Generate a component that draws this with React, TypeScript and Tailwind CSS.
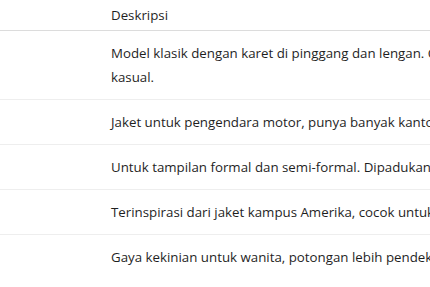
const rows = [
	{ nama: "Bomber", deskripsi: "Model klasik dengan karet di pinggang dan lengan. Cocok dipakai untuk gaya santai dan kasual." },
	{ nama: "Touring", deskripsi: "Jaket untuk pengendara motor, punya banyak kantong." },
	{ nama: "Blazer", deskripsi: "Untuk tampilan formal dan semi-formal. Dipadukan dengan kemeja." },
	{ nama: "Varsity", deskripsi: "Terinspirasi dari jaket kampus Amerika, cocok untuk remaja." },
	{ nama: "Crop", deskripsi: "Gaya kekinian untuk wanita, potongan lebih pendek." },
];

export default function App() {
	return (
		<div className="h-[287px] w-[430px] overflow-hidden bg-white font-['Open_Sans','Noto_Sans',sans-serif] text-[13.3px] leading-6 text-[#1f1f1f]">
			<div className="w-[700px]">
				<div className="grid grid-cols-[100px_590px] border-b border-[#dcdcdc]">
					<div />
					<div className="pl-[11px] pt-[3px] pb-[3px]">Deskripsi</div>
				</div>
				{rows.map((row) => (
					<div
						key={row.nama}
						className="grid grid-cols-[100px_590px] border-b border-[#eeeeee] last:border-b-0"
					>
						<div />
						<div className="py-[10px] pl-[11px] pr-2">{row.deskripsi}</div>
					</div>
				))}
			</div>
		</div>
	);
}
